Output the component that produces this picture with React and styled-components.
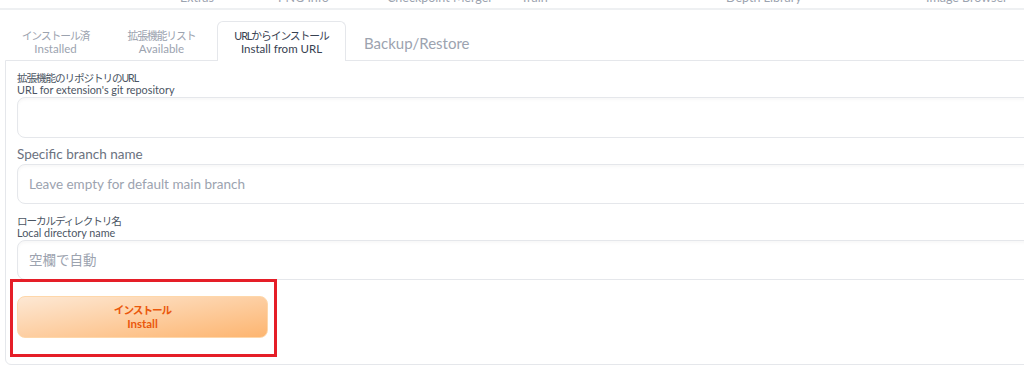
import styled, { createGlobalStyle } from "styled-components";

const GlobalStyle = createGlobalStyle`
    html, body {
        margin: 0;
        padding: 0;
        background: #ffffff;
        overflow: hidden;
    }
    body {
        font-family: Lato, "Noto Sans CJK JP", sans-serif;
        color: #4b5563;
    }
`;

const NAV_ITEMS = [
    { label: 'Extras', width: 98 },
    { label: 'PNG Info', width: 109 },
    { label: 'Checkpoint Merger', width: 134 },
    { label: 'Train', width: 205 },
    { label: 'Depth Library', width: 200 },
    { label: 'Image Browser', width: 140 },
];

const TABS = [
    { jp: 'インストール済', en: 'Installed', width: 101 },
    { jp: '拡張機能リスト', en: 'Available', width: 111 },
    { jp: 'URLからインストール', en: 'Install from URL', width: 129, active: true },
];

export default function App() {
    return <Page>
        <GlobalStyle />
        <TopNav>
            {NAV_ITEMS.map(item => (
                <NavItem key={item.label} $width={item.width}>{item.label}</NavItem>
            ))}
        </TopNav>

        <TabBar>
            {TABS.map(tab => (
                <Tab key={tab.en} $width={tab.width} $active={tab.active}>
                    <TabJp>{tab.jp}</TabJp>
                    <TabEn>{tab.en}</TabEn>
                </Tab>
            ))}
            <PlainTab>Backup/Restore</PlainTab>
        </TabBar>

        <Panel>
            <Field>
                <Label>
                    <LabelJp>拡張機能のリポジトリのURL</LabelJp>
                    <LabelEn>URL for extension's git repository</LabelEn>
                </Label>
                <TextBox />
            </Field>
            <Field $gap={7}>
                <SingleLabel>Specific branch name</SingleLabel>
                <TextBox $height={40} placeholder='Leave empty for default main branch' />
            </Field>
            <Field $gap={11}>
                <Label>
                    <LabelJp>ローカルディレクトリ名</LabelJp>
                    <LabelEn>Local directory name</LabelEn>
                </Label>
                <TextBox $height={40} placeholder='空欄で自動' />
            </Field>

            <ButtonWrap>
                <InstallButton type='button'>
                    <span>インストール</span>
                    <span>Install</span>
                </InstallButton>
                <Highlight />
            </ButtonWrap>
        </Panel>
    </Page>
}

const Page = styled.div`
    width: 1070px;
    height: 370px;
`;

const TopNav = styled.nav`
    display: flex;
    height: 8px;
    padding-left: 180px;
    border-bottom: 2px solid #eef0f2;
    overflow: hidden;
`;

const NavItem = styled.span`
    flex: 0 0 ${p => p.$width}px;
    margin-top: -9px;
    font-size: 12.5px;
    line-height: 14px;
    color: #9ca3af;
    white-space: nowrap;
`;

const TabBar = styled.div`
    display: flex;
    align-items: flex-end;
    height: 39px;
    margin-top: 11px;
    padding-left: 5px;
    position: relative;
    z-index: 1;
`;

const Tab = styled.div`
    box-sizing: border-box;
    width: ${p => p.$width}px;
    height: ${p => p.$active ? 40 : 39}px;
    margin-bottom: ${p => p.$active ? -1 : 0}px;
    display: flex;
    flex-direction: column;
    align-items: center;
    justify-content: center;
    padding-top: 2px;
    background: #ffffff;
    border: 1px solid ${p => p.$active ? '#e5e7eb' : 'transparent'};
    border-bottom: none;
    border-radius: 6px 6px 0 0;
    color: ${p => p.$active ? '#374151' : '#9ca3af'};
    white-space: nowrap;
`;

const TabJp = styled.span`
    font-size: 10.8px;
    letter-spacing: -1.1px;
    line-height: 13px;
`;

const TabEn = styled.span`
    font-size: 11.5px;
    line-height: 14px;
`;

const PlainTab = styled.div`
    align-self: center;
    padding: 4px 0 0 18px;
    font-size: 15px;
    color: #9ca3af;
    white-space: nowrap;
`;

const Panel = styled.section`
    box-sizing: border-box;
    margin-left: 5px;
    height: 305px;
    padding: 11px 11px 0;
    border: 1px solid #e5e7eb;
    border-radius: 0 0 6px 6px;
    display: flex;
    flex-direction: column;
`;

const Field = styled.div`
    display: flex;
    flex-direction: column;
    margin-top: ${p => p.$gap ?? 0}px;
`;

const Label = styled.label`
    display: flex;
    flex-direction: column;
    color: #4b5563;
    padding-bottom: 1px;
`;

const LabelJp = styled.span`
    font-size: 10.6px;
    letter-spacing: -1.1px;
    line-height: 12px;
`;

const LabelEn = styled.span`
    font-size: 10.8px;
    line-height: 12px;
`;

const SingleLabel = styled.label`
    font-size: 13.5px;
    line-height: 18px;
    color: #6b7280;
    padding-bottom: 1px;
`;

const TextBox = styled.input`
    box-sizing: border-box;
    width: 100%;
    height: ${p => p.$height ?? 41}px;
    padding: 0 11px;
    border: 1px solid #e5e7eb;
    border-radius: 8px;
    background: #ffffff;
    box-shadow: inset 0 2px 3px rgba(0, 0, 0, 0.03);
    font-family: Lato, "Noto Sans CJK JP", sans-serif;
    font-size: 13.5px;
    color: #374151;
    outline: none;
    &::placeholder {
        color: #9ca3af;
    }
`;

const ButtonWrap = styled.div`
    position: relative;
    width: 251px;
    margin-top: 16px;
`;

const InstallButton = styled.button`
    box-sizing: border-box;
    width: 100%;
    height: 42px;
    display: flex;
    flex-direction: column;
    align-items: center;
    justify-content: center;
    border: 1px solid #fed7aa;
    border-radius: 8px;
    background: linear-gradient(to bottom right, #fde8d4, #fdb570);
    color: #ea580c;
    font-family: Lato, "Noto Sans CJK JP", sans-serif;
    font-weight: 700;
    span:first-child {
        font-size: 10.6px;
        letter-spacing: -1px;
        line-height: 13px;
    }
    span:last-child {
        font-size: 11.5px;
        line-height: 13px;
    }
`;

const Highlight = styled.div`
    position: absolute;
    top: -17px;
    left: -7px;
    right: -9px;
    bottom: -19px;
    border: 3px solid #e51e28;
    pointer-events: none;
`;
